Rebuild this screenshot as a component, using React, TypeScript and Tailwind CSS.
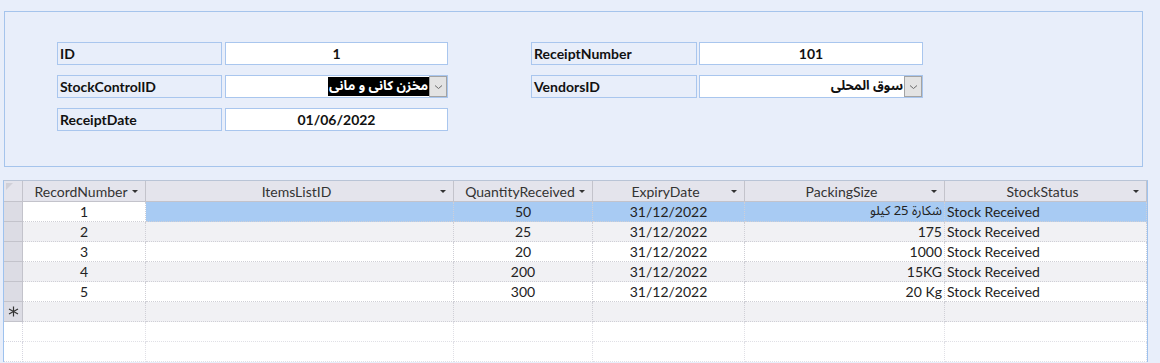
import React from 'react'

const font = "font-['Lato','DejaVu_Sans',sans-serif]"
const arabic = "font-['Noto_Sans_Arabic','DejaVu_Sans_Condensed','DejaVu_Sans',sans-serif]"

type Col = { name: string; w: string; align: string }

const columns: Col[] = [
  { name: 'RecordNumber', w: 'w-[123px]', align: 'justify-center' },
  { name: 'ItemsListID', w: 'w-[308px]', align: 'justify-center' },
  { name: 'QuantityReceived', w: 'w-[139px]', align: 'justify-center' },
  { name: 'ExpiryDate', w: 'w-[152px]', align: 'justify-center' },
  { name: 'PackingSize', w: 'w-[200px]', align: 'justify-end' },
  { name: 'StockStatus', w: 'w-[202px]', align: 'justify-start' },
]

const rows = [
  ['1', '', '50', '31/12/2022', 'شكارة 25 كيلو', 'Stock Received'],
  ['2', '', '25', '31/12/2022', '175', 'Stock Received'],
  ['3', '', '20', '31/12/2022', '1000', 'Stock Received'],
  ['4', '', '200', '31/12/2022', '15KG', 'Stock Received'],
  ['5', '', '300', '31/12/2022', '20 Kg', 'Stock Received'],
]

function Chevron() {
  return (
    <svg width="9" height="6" viewBox="0 0 9 6" fill="none">
      <path d="M1 1.5 L4.5 4.5 L8 1.5" stroke="#6b6b6b" strokeWidth="1" />
    </svg>
  )
}

function Asterisk() {
  return (
    <svg width="11" height="11" viewBox="0 0 11 11" stroke="#333" strokeWidth="1.2">
      <path d="M5.5 0.5 V10.5 M1 3 L10 8 M1 8 L10 3" />
    </svg>
  )
}

function Label({ text }: { text: string }) {
  return (
    <div className="h-[23px] border border-[#a9c6ee] flex items-center px-[2px] text-[14px] font-bold text-[#111]">
      {text}
    </div>
  )
}

function Field({ value }: { value: string }) {
  return (
    <div className="h-[23px] bg-white border border-[#a9c6ee] flex items-center justify-center text-[14px] font-bold text-[#111]">
      {value}
    </div>
  )
}

function Combo({ value, selected }: { value: string; selected?: boolean }) {
  return (
    <div className="h-[23px] bg-white border border-[#a9c6ee] flex items-stretch justify-end text-[13px] font-bold">
      <div className="flex items-center">
        <span
          dir="rtl"
          className={`${arabic} px-[1px] leading-[19px] ${selected ? 'bg-black text-white' : 'text-[#111]'}`}
        >
          {value}
        </span>
      </div>
      <div className="w-[18px] bg-[#e3e3e3] border border-[#a3a3a3] flex items-center justify-center">
        <Chevron />
      </div>
    </div>
  )
}

function HeaderArrow() {
  return <span className="absolute right-[7px] top-[9px] w-0 h-0 border-x-[3px] border-x-transparent border-t-[3px] border-t-[#333]" />
}

export default function App() {
  return (
    <div className={`w-[1160px] h-[363px] overflow-hidden bg-[#e8eefa] ${font}`}>
      {/* form header */}
      <div className="pt-[11px] pl-[4px]">
        <div className="w-[1139px] h-[156px] border border-[#a5c4ec] pt-[30px] pl-[52px] flex gap-[83px]">
          <div className="grid grid-cols-[165px_223px] gap-x-[3px] gap-y-[10px] content-start">
            <Label text="ID" />
            <Field value="1" />
            <Label text="StockControlID" />
            <Combo value="مخزن كانى و مانى" selected />
            <Label text="ReceiptDate" />
            <Field value="01/06/2022" />
          </div>
          <div className="grid grid-cols-[166px_224px] gap-x-[2px] gap-y-[10px] content-start">
            <Label text="ReceiptNumber" />
            <Field value="101" />
            <Label text="VendorsID" />
            <Combo value="سوق المحلى" />
          </div>
        </div>
      </div>

      {/* datasheet */}
      <div className="mt-[13px] ml-[3px] w-[1145px] border-x border-t border-x-[#9ec2ee] border-t-[#b9c4d6] text-[14px] text-[#222]">
        <div className="flex h-[21px] border-b border-[#c3c3cb] bg-[#e4e4ec]">
          <div className="w-[19px] border-r border-[#c3c3cb] relative">
            <span className="absolute left-[2px] top-[2px] w-0 h-0 border-r-[7px] border-r-transparent border-t-[7px] border-t-[#d0d0d8]" />
          </div>
          {columns.map((c) => (
            <div
              key={c.name}
              className={`${c.w} relative border-r border-[#c3c3cb] flex items-center justify-center text-[#333] pr-[6px]`}
            >
              {c.name}
              <HeaderArrow />
            </div>
          ))}
        </div>

        {rows.map((r, i) => (
          <div key={i} className={`flex h-[20px] ${i % 2 === 1 ? 'bg-[#f1f1f4]' : 'bg-white'}`}>
            <div className="w-[19px] bg-[#dcdce4] border-r border-b border-[#c3c3cb]" />
            {columns.map((c, j) => (
              <div
                key={c.name}
                className={`${c.w} flex items-center ${c.align} px-[2px] border-r border-b border-dotted border-[#cfcfd6] ${
                  i === 0 && j > 0 ? 'bg-[#a8cbf3]' : ''
                }`}
              >
                {j === 4 && i === 0 ? <span className={`${arabic} text-[13px]`}>{r[j]}</span> : r[j]}
              </div>
            ))}
          </div>
        ))}

        <div className="flex h-[20px] bg-[#f1f1f4]">
          <div className="w-[19px] bg-[#dcdce4] border-r border-b border-[#c3c3cb] flex items-center justify-center">
            <Asterisk />
          </div>
          {columns.map((c) => (
            <div key={c.name} className={`${c.w} border-r border-b border-dotted border-[#cfcfd6]`} />
          ))}
        </div>

        {[0, 1].map((k) => (
          <div key={k} className="flex h-[20px] bg-white">
            <div className="w-[19px] border-r border-b border-dotted border-[#d6d6e0]" />
            {columns.map((c) => (
              <div key={c.name} className={`${c.w} border-r border-b border-dotted border-[#e0e0e6]`} />
            ))}
          </div>
        ))}
      </div>
    </div>
  )
}
